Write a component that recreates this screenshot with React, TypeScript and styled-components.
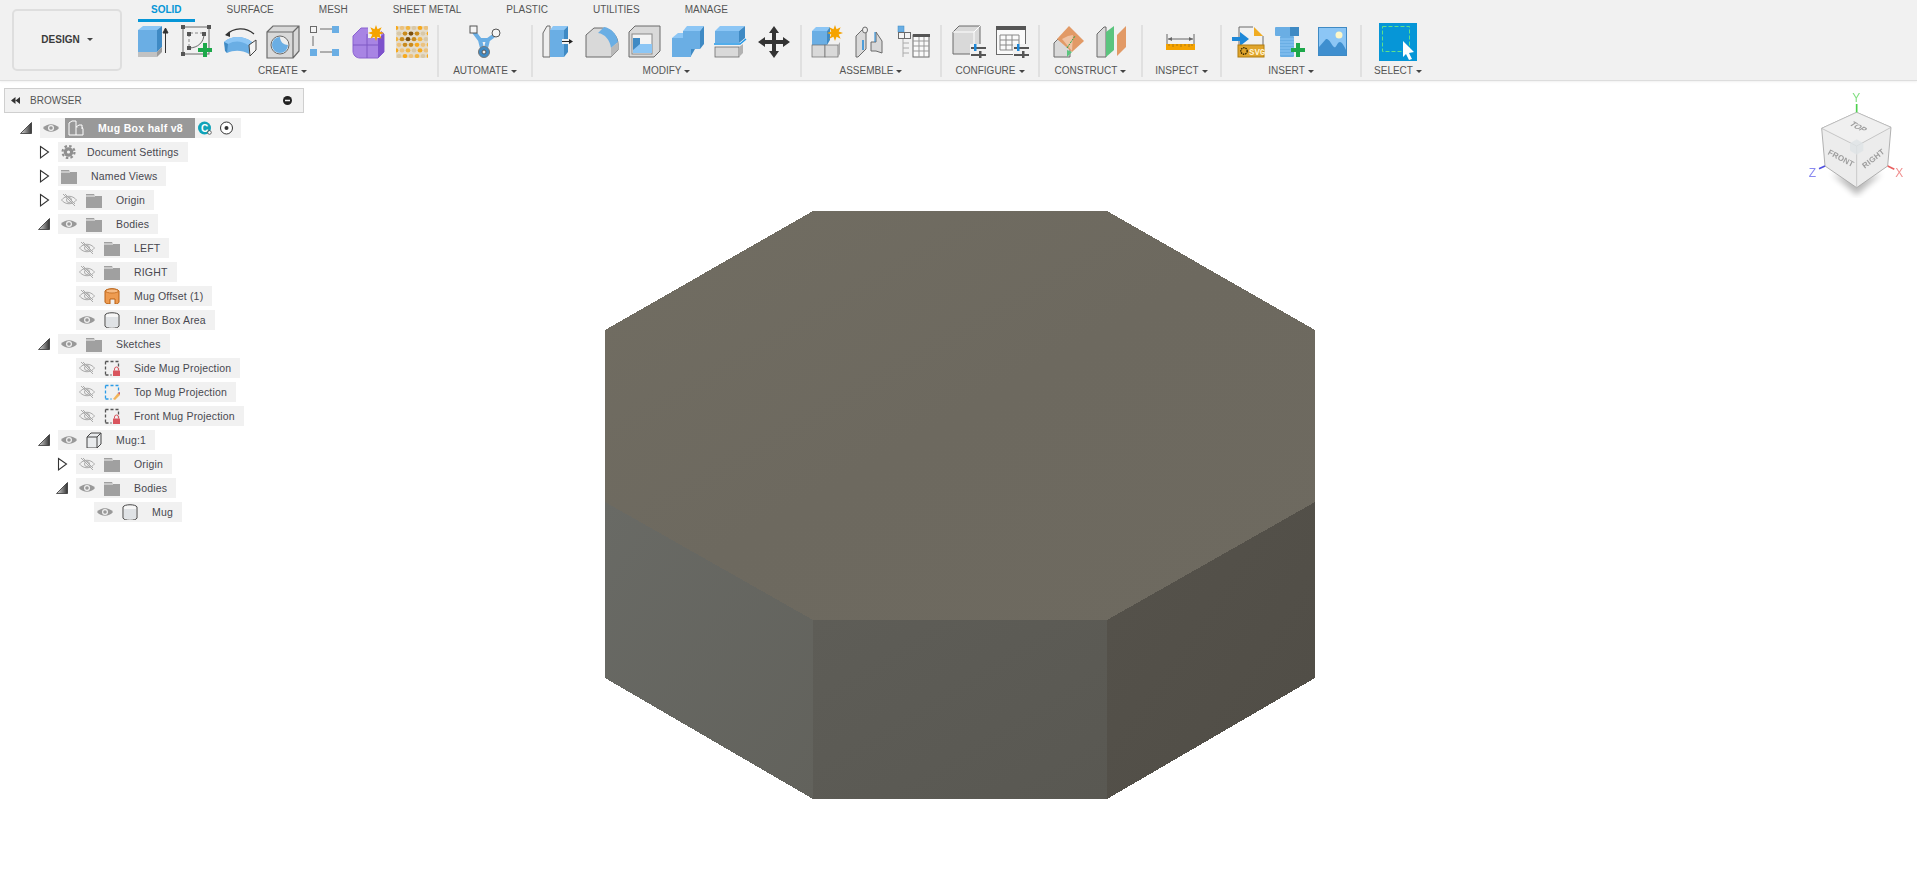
import { ReactNode } from "react";
import styled, { createGlobalStyle } from "styled-components";

const BLUE = "#6aaee4";
const BLUE_DARK = "#3f8ac4";
const BLUE_LIGHT = "#8cc6f5";
const GREY = "#d9d9d9";
const LINE = "#6b6b6b";
const GREEN = "#1da84a";
const AMBER = "#f5a300";

const GlobalStyle = createGlobalStyle`
  html, body {
    margin: 0;
    padding: 0;
    background: #ffffff;
    font-family: "Liberation Sans", Arial, sans-serif;
  }
`;

const Page = styled.div`
  position: relative;
  width: 100vw;
  height: 100vh;
  overflow: hidden;
  background: #ffffff;
`;

const Toolbar = styled.header`
  display: flex;
  height: 80px;
  background: #f1f1f1;
  border-bottom: 1px solid #dddddd;
  box-shadow: 0 1px 2px rgba(0, 0, 0, 0.06);
`;

const DesignButton = styled.button`
  display: flex;
  align-items: center;
  justify-content: center;
  gap: 7px;
  width: 110px;
  height: 62px;
  margin: 9px 6px 0 12px;
  padding: 0 0 2px;
  background: #f1f1f1;
  border: 2px solid #dedede;
  border-radius: 5px;
  font: bold 10px "Liberation Sans", Arial, sans-serif;
  color: #3a3a3a;
`;

const Caret = styled.span`
  width: 0;
  height: 0;
  border-left: 3px solid transparent;
  border-right: 3px solid transparent;
  border-top: 3px solid #444444;
`;

const Ribbon = styled.div`
  display: flex;
  flex-direction: column;
`;

const TabBar = styled.nav`
  display: flex;
  gap: 19px;
  height: 22px;
  margin-left: 10px;
`;

const Tab = styled.div<{ $active?: boolean }>`
  height: 19px;
  padding: 0 13px;
  line-height: 20px;
  font-size: 10px;
  font-weight: ${(p) => (p.$active ? "bold" : "normal")};
  color: ${(p) => (p.$active ? "#0696d7" : "#555555")};
  box-sizing: content-box;
  border-bottom: 3px solid ${(p) => (p.$active ? "#0696d7" : "transparent")};
`;

const Panels = styled.div`
  display: flex;
  margin-top: 3px;
`;

const Group = styled.section<{ $width: number }>`
  display: flex;
  flex: none;
  flex-direction: column;
  align-items: center;
  box-sizing: border-box;
  width: ${(p) => p.$width}px;
  height: 52px;
  padding-top: 1px;
  border-right: 2px solid #e0e0e0;
  &:last-child {
    border-right: none;
  }
`;

const IconRow = styled.div`
  display: flex;
  align-items: center;
  justify-content: center;
  gap: 11px;
  height: 32px;
`;

const GroupLabel = styled.div`
  display: flex;
  align-items: center;
  gap: 3px;
  margin-top: 7px;
  line-height: 12px;
  font-size: 10px;
  color: #555555;
  white-space: nowrap;
`;

const Glyph = styled.svg`
  display: block;
  flex: none;
  width: 32px;
  height: 32px;
  overflow: visible;
`;

const SelectTile = styled.svg`
  display: block;
  flex: none;
  width: 38px;
  height: 38px;
`;

const Workspace = styled.main`
  position: relative;
  height: 812px;
`;

const Model = styled.svg`
  position: absolute;
  left: 0;
  top: 0;
  width: 1917px;
  height: 812px;
`;

const ViewCube = styled.svg`
  position: absolute;
  right: 0;
  top: -1px;
  width: 127px;
  height: 120px;
  filter: blur(0.4px);
`;

const BrowserPanel = styled.aside`
  position: relative;
  width: 300px;
  padding: 7px 0 0 4px;
`;

const BrowserHeader = styled.div`
  display: flex;
  align-items: center;
  height: 23px;
  padding: 0 11px 0 6px;
  background: #f1f1f1;
  border: 1px solid #cfcfcf;
  font-size: 10px;
  color: #555555;
`;

const HeaderTitle = styled.span`
  flex: 1;
  margin-left: 10px;
`;

const Tree = styled.ul`
  display: flex;
  flex-direction: column;
  gap: 4px;
  margin: 5px 0 0 18px;
  padding: 0;
  list-style: none;
`;

const Row = styled.li<{ $level: number }>`
  display: flex;
  align-items: center;
  height: 20px;
  padding-left: ${(p) => p.$level * 18}px;
`;

const Twisty = styled.svg`
  flex: none;
  width: 18px;
  height: 20px;
  overflow: visible;
`;

const Pill = styled.div`
  display: inline-flex;
  align-items: center;
  height: 20px;
  padding: 0 9px 0 3px;
  background: #f1f1f1;
  font-size: 10.5px;
  letter-spacing: 0.17px;
  color: #484850;
  white-space: nowrap;
`;

const Slot = styled.svg`
  flex: none;
  width: 16px;
  height: 16px;
`;

const EyeSlot = styled(Slot)`
  margin-right: 9px;
`;

const NodeSlot = styled(Slot)<{ $tight?: boolean }>`
  margin-right: ${(p) => (p.$tight ? "10px" : "14px")};
`;

const RootName = styled.div`
  display: flex;
  align-items: center;
  width: 130px;
  height: 20px;
  margin-left: -3px;
  padding-left: 3px;
  box-sizing: border-box;
  background: #999999;
  color: #ffffff;
  font-weight: bold;
  letter-spacing: 0.3px;
`;

const RootIcon = styled(Slot)`
  margin-right: 14px;
`;

const RootTail = styled.svg`
  flex: none;
  width: 44px;
  height: 20px;
  margin-right: -7px;
`;

function Star({ cx, cy, r }: { cx: number; cy: number; r: number }) {
  const pts: string[] = [];
  for (let i = 0; i < 16; i++) {
    const a = (i * Math.PI) / 8;
    const d = i % 2 === 0 ? r : r * 0.5;
    pts.push(`${cx + d * Math.cos(a)},${cy + d * Math.sin(a)}`);
  }
  return <polygon points={pts.join(" ")} fill={AMBER} />;
}

function Plus({ cx, cy }: { cx: number; cy: number }) {
  return (
    <path
      d={`M${cx - 2} ${cy - 7}h4v5h5v4h-5v5h-4v-5h-5v-4h5z`}
      fill={GREEN}
    />
  );
}

function Sliders({ x, y }: { x: number; y: number }) {
  return (
    <g>
      <rect x={x} y={y} width="15" height="2" fill="#555" />
      <rect x={x} y={y + 7} width="15" height="2" fill="#555" />
      <rect x={x + 3} y={y - 3} width="2.5" height="7" fill="#1e88d8" />
      <rect x={x + 8} y={y + 4} width="2.5" height="7" fill="#555" />
    </g>
  );
}

// honeycomb cells of the lattice tool, darker towards the middle
const cells: { x: number; y: number; fill: string }[] = [];
for (let r = 0; r < 6; r++) {
  for (let c = 0; c < 6; c++) {
    const x = c * 6 + (r % 2 ? 3 : 0);
    const y = r * 5.6 + 2;
    const d = Math.hypot(x - 13, y - 11);
    const warm = (r * 3 + c * 5) % 4;
    cells.push({
      x,
      y,
      fill: d < 4 ? "#7a4e0c" : d < 9 ? "#c98a1c" : warm === 0 ? "#f7a91c" : warm === 1 ? "#ecc27e" : warm === 2 ? "#f2b540" : "#d8c8a8",
    });
  }
}

const icons: Record<string, ReactNode> = {
  extrude: (
    <>
      <rect x="0" y="4" width="19" height="22" fill={BLUE} />
      <polygon points="0,4 5,0 24,0 19,4" fill={BLUE_LIGHT} />
      <polygon points="19,4 24,0 24,21 19,26" fill={BLUE_DARK} />
      <rect x="0" y="26" width="19" height="5" fill="#c2c2c2" />
      <polygon points="19,26 24,21 24,26 19,31" fill="#9c9c9c" />
      <path d="M27.5 27V3M25 7l2.5-5 2.5 5z" stroke="#333" strokeWidth="1" fill="#333" />
    </>
  ),
  sketch: (
    <>
      <rect x="2" y="1" width="26" height="27" fill="none" stroke={LINE} />
      <path d="M9 7h15M8 8v14" stroke="#888" strokeDasharray="3 2" fill="none" />
      <path d="M23 8c0 8-6 14-15 14" stroke={LINE} fill="none" />
      {[[0, -1], [26, -1], [0, 26], [6, 6], [21, 6], [6, 20]].map(([x, y]) => (
        <rect key={`${x}-${y}`} x={x} y={y} width="4" height="4" fill="#555" />
      ))}
      <Plus cx={24} cy={24} />
    </>
  ),
  sweep: (
    <>
      <path d="M2 9C10 1 22 1 30 8" stroke="#333" strokeWidth="1.2" fill="none" />
      <path d="M1 9l5-3v5z" fill="#333" />
      <path d="M0 16c8-7 20-6 28 0l-3 12C18 24 10 24 3 27z" fill={BLUE} />
      <path d="M0 16c8-7 20-6 28 0l-4 3c-6-4-13-5-20-1z" fill={BLUE_LIGHT} />
      <path d="M0 16l4 2-1 9-2-2z" fill={BLUE_DARK} />
      <polygon points="25,19 32,14 32,24 26,30" fill="#f4f4f4" stroke="#444" />
    </>
  ),
  hole: (
    <>
      <polygon points="0,6 6,0 32,0 32,25 26,32 0,32" fill={GREY} />
      <path d="M0 6h26v26H0zM0 6l6-6h26v25l-6 7M26 6l6-6" fill="none" stroke={LINE} strokeWidth="1.2" />
      <circle cx="13" cy="19" r="9" fill="#eee" stroke={LINE} />
      <path d="M13 11a8 8 0 1 0 8 8c-4 0-8-3-8-8z" fill={BLUE} />
    </>
  ),
  pattern: (
    <>
      <path d="M10 3h12M3 10v10M10 26h12" stroke={LINE} />
      <rect x="0.5" y="0.5" width="6" height="6" fill="#f4f4f4" stroke={LINE} />
      <rect x="22" y="0" width="7" height="7" fill={BLUE} />
      <rect x="0" y="23" width="7" height="7" fill={BLUE} />
      <rect x="22" y="23" width="7" height="7" fill={BLUE} />
    </>
  ),
  form: (
    <>
      <path d="M8 2h16l7 6v18l-6 6H7c-4 0-7-3-7-7V10z" fill="#a884e4" stroke="#8a62d0" />
      <path d="M0 19h25M14 8v24" stroke="#7e58c4" />
      <path d="M25 12l6-4v18l-6 6z" fill="#7d52cc" />
      <rect x="15" y="-1" width="13" height="13" fill="#f1f1f1" />
      <Star cx={23} cy={7} r={8} />
    </>
  ),
  lattice: (
    <>
      <rect width="32" height="32" fill="#e4dccb" />
      <svg x="0" y="0" width="32" height="32" viewBox="0 0 32 32">
        {cells.map((c) => (
          <ellipse key={`${c.x}-${c.y}`} cx={c.x} cy={c.y} rx="2.4" ry="2.1" fill={c.fill} />
        ))}
      </svg>
    </>
  ),
  automate: (
    <>
      <path d="M5 6L11 14 14 26M27 8L19 14 16 26M11 14h8" stroke={BLUE} strokeWidth="4" fill="none" />
      <rect x="1" y="0" width="7" height="7" fill="#f4f4f4" stroke="#555" />
      <circle cx="27" cy="7" r="4" fill="#f4f4f4" stroke="#555" />
      <circle cx="15" cy="26" r="5.5" fill={BLUE_DARK} stroke="#777" />
      <circle cx="15" cy="26" r="2" fill="#eee" stroke="#555" />
    </>
  ),
  pressPull: (
    <>
      <polygon points="0,7 4,0 7,0 7,31 0,31" fill="#eee" stroke={LINE} />
      <rect x="7" y="4" width="14" height="27" fill={BLUE} />
      <polygon points="7,4 10,0 25,0 21,4" fill={BLUE_LIGHT} />
      <polygon points="21,4 25,0 25,26 21,31" fill={BLUE_DARK} />
      <rect x="19" y="13" width="10" height="5" fill="#f1f1f1" />
      <path d="M19 15.5h9" stroke="#222" />
      <path d="M26 13l4 2.5-4 2.5z" fill="#222" />
    </>
  ),
  fillet: (
    <>
      <path d="M0 9L8 2h8c9 0 16 8 16 16v6l-7 7H0z" fill={GREY} stroke={LINE} />
      <path d="M12 7l6-6c7 1 13 7 14 15l-7 6C24 14 19 8 12 7z" fill={BLUE} />
      <path d="M25 22l7-6v8l-7 7z" fill="#b9b9b9" />
    </>
  ),
  shell: (
    <>
      <polygon points="0,6 6,0 31,0 31,25 25,31 0,31" fill={GREY} stroke={LINE} />
      <rect x="3" y="8" width="20" height="20" fill="#f4f4f4" stroke="#888" />
      <rect x="4" y="12" width="7" height="12" fill={BLUE_DARK} />
      <polygon points="4,24 11,18 23,18 23,27 4,27" fill={BLUE_LIGHT} />
    </>
  ),
  combine: (
    <>
      <rect x="0" y="12" width="19" height="19" fill={BLUE} />
      <polygon points="0,12 6,7 12,7 12,12" fill={BLUE_LIGHT} />
      <rect x="11" y="5" width="17" height="18" fill={BLUE} />
      <polygon points="11,5 15,0 32,0 28,5" fill={BLUE_LIGHT} />
      <polygon points="28,5 32,0 32,18 28,23" fill={BLUE_DARK} />
      <polygon points="19,23 23,23 19,30" fill={BLUE_DARK} />
    </>
  ),
  split: (
    <>
      <rect x="0" y="5" width="24" height="12" fill={BLUE} />
      <polygon points="0,5 5,0 30,0 24,5" fill={BLUE_LIGHT} />
      <polygon points="24,5 30,0 30,12 24,17" fill={BLUE_DARK} />
      <path d="M-1 18h26l6-5" stroke="#1e96e8" strokeWidth="1.5" fill="none" />
      <rect x="0" y="21" width="24" height="10" fill={GREY} stroke={LINE} strokeWidth="0.8" />
      <polygon points="24,21 28,18 28,27 24,31" fill="#b2b2b2" />
    </>
  ),
  move: (
    <path
      d="M16 0l5 7h-3v7h7v-3l7 5-7 5v-3h-7v7h3l-5 7-5-7h3v-7H7v3l-7-5 7-5v3h7V7h-3z"
      fill="#333"
    />
  ),
  component: (
    <>
      <rect x="0" y="5" width="15" height="14" fill={BLUE} />
      <polygon points="0,5 4,1 18,1 15,5" fill={BLUE_LIGHT} />
      <polygon points="15,5 18,1 18,14 15,19" fill={BLUE_DARK} />
      <rect x="0" y="19" width="13" height="12" fill={GREY} stroke={LINE} strokeWidth="0.7" />
      <rect x="13" y="19" width="13" height="12" fill={GREY} stroke={LINE} strokeWidth="0.7" />
      <polygon points="26,19 28,16 28,28 26,31" fill="#aaa" />
      <Star cx={23} cy={7} r={8} />
    </>
  ),
  joint: (
    <>
      <path d="M1 10l7-7h3v20l-8 8H1z" fill={GREY} stroke={LINE} />
      <ellipse cx="10" cy="4" rx="2.5" ry="3" fill="#eee" stroke={LINE} />
      <path d="M8 14v10" stroke="#1e88d8" strokeWidth="1.5" />
      <path d="M16 16h5V6l6 9v12l-6-2h-5z" fill={GREY} stroke={LINE} />
      <path d="M20 6v10" stroke="#1e88d8" />
    </>
  ),
  tree: (
    <>
      <rect x="0" y="0" width="6" height="6" fill={BLUE} stroke={BLUE_DARK} strokeWidth="0.5" />
      <rect x="0.5" y="6.5" width="6" height="6" fill="#f4f4f4" stroke={LINE} />
      <rect x="6.5" y="6.5" width="6" height="6" fill="#f4f4f4" stroke={LINE} />
      <path d="M5 13v18M5 17h6M5 22h6M5 27h6" stroke="#aaa" fill="none" />
      <rect x="15" y="9" width="16" height="22" fill="#fafafa" stroke={LINE} />
      <rect x="15" y="8" width="17" height="3" fill="#555" />
      <path d="M15 15h16M15 20h16M15 25h16M21 11v20M26 11v20" stroke="#999" fill="none" />
    </>
  ),
  configBox: (
    <>
      <polygon points="0,6 6,0 27,0 27,21 21,28 0,28" fill={GREY} stroke={LINE} />
      <path d="M0 6h21v22M21 6l6-6" stroke="#fff" fill="none" />
      <rect x="17" y="18" width="16" height="14" fill="#f1f1f1" />
      <Sliders x={18} y={21} />
    </>
  ),
  configTable: (
    <>
      <rect x="0.5" y="0.5" width="29" height="28" fill="#fafafa" stroke={LINE} />
      <rect x="0" y="0" width="30" height="4" fill="#555" />
      <path d="M4 9h19v15H4zM4 14h19M4 19h19M10 9v15M16 9v15" stroke="#888" fill="none" />
      <rect x="17" y="18" width="16" height="14" fill="#f1f1f1" />
      <Sliders x={18} y={21} />
    </>
  ),
  plane: (
    <>
      <path d="M1 17l6-6h10v20H1z" fill={GREY} stroke={LINE} />
      <polygon points="4,13 16,0 31,15 19,26" fill="#e29a66" />
      <polygon points="9,13 15,10 20,9 19,25" fill="#efc3a4" />
      <path d="M14 22L22 10" stroke={GREEN} strokeDasharray="2 1" />
      <polygon points="14,24 19,26 14,31" fill="#5bc47e" />
    </>
  ),
  midplane: (
    <>
      <polygon points="1,8 8,1 10,1 10,31 1,31" fill={GREY} stroke={LINE} />
      <polygon points="10,6 18,0 18,24 10,31" fill="#5bc47e" />
      <polygon points="21,9 30,0 30,21 21,30" fill="#e29a66" />
    </>
  ),
  measure: (
    <>
      <path d="M1 8v10M28 8v10M2 13h25" stroke="#666" fill="none" />
      <path d="M2 13l4-2v4zM27 13l-4-2v4z" fill="#666" />
      <rect x="0" y="18" width="29" height="6" fill={AMBER} />
      <path d="M3 18v2M7 18v3M11 18v2M15 18v3M19 18v2M23 18v3M26 18v2" stroke="#b07a10" />
    </>
  ),
  svgFile: (
    <>
      <path d="M7 20V1h14M31 10v10" stroke={LINE} fill="none" />
      <polygon points="22,1 31,10 22,10" fill="#f0ac22" />
      <path d="M0 11h8V6l9 7-9 7v-5H0z" fill="#1e88d8" />
      <rect x="6" y="19" width="26" height="12" fill="#e0a52c" stroke="#b07c10" />
      <circle cx="12" cy="25" r="3.2" fill="none" stroke="#3a2a00" strokeWidth="1.4" strokeDasharray="1.5 0.8" />
      <text x="17" y="29" fontSize="9" fontWeight="bold" fill="#fff3cf" fontFamily="Liberation Mono, monospace">SVG</text>
    </>
  ),
  bolt: (
    <>
      <rect x="0" y="1" width="24" height="9" rx="1" fill={BLUE} />
      <rect x="15" y="1" width="9" height="9" fill={BLUE_DARK} />
      <rect x="5" y="10" width="14" height="21" rx="1" fill={BLUE} />
      <path d="M5 13h14M5 16h14M5 19h14M5 22h14M5 25h14M5 28h14" stroke={BLUE_LIGHT} />
      <Plus cx={23} cy={24} />
    </>
  ),
  picture: (
    <>
      <rect x="0.5" y="1.5" width="28" height="28" fill={BLUE_LIGHT} stroke={BLUE_DARK} />
      <circle cx="21" cy="9" r="3.5" fill="#fdf7c8" />
      <path d="M1 26V21l7-8c3-1 5 5 8 8 2 2 3-5 6-5 2 0 4 4 6 8v5H1z" fill="#3f8fcf" />
    </>
  ),
};

type GroupDef = { label: string; width: number; tools: string[] };

const groups: GroupDef[] = [
  { label: "CREATE", width: 311, tools: ["extrude", "sketch", "sweep", "hole", "pattern", "form", "lattice"] },
  { label: "AUTOMATE", width: 94, tools: ["automate"] },
  { label: "MODIFY", width: 269, tools: ["pressPull", "fillet", "shell", "combine", "split", "move"] },
  { label: "ASSEMBLE", width: 140, tools: ["component", "joint", "tree"] },
  { label: "CONFIGURE", width: 98, tools: ["configBox", "configTable"] },
  { label: "CONSTRUCT", width: 103, tools: ["plane", "midplane"] },
  { label: "INSPECT", width: 79, tools: ["measure"] },
  { label: "INSERT", width: 140, tools: ["svgFile", "bolt", "picture"] },
];

const tabs = ["SOLID", "SURFACE", "MESH", "SHEET METAL", "PLASTIC", "UTILITIES", "MANAGE"];

type NodeKind = "folder" | "gear" | "orange" | "body" | "cube" | "lock" | "edit";
type TreeNode = {
  name: string;
  level: number;
  kind: NodeKind;
  twisty?: "open" | "closed";
  eye?: "on" | "off";
};

const nodes: TreeNode[] = [
  { name: "Document Settings", level: 1, kind: "gear", twisty: "closed" },
  { name: "Named Views", level: 1, kind: "folder", twisty: "closed" },
  { name: "Origin", level: 1, kind: "folder", twisty: "closed", eye: "off" },
  { name: "Bodies", level: 1, kind: "folder", twisty: "open", eye: "on" },
  { name: "LEFT", level: 2, kind: "folder", eye: "off" },
  { name: "RIGHT", level: 2, kind: "folder", eye: "off" },
  { name: "Mug Offset (1)", level: 2, kind: "orange", eye: "off" },
  { name: "Inner Box Area", level: 2, kind: "body", eye: "on" },
  { name: "Sketches", level: 1, kind: "folder", twisty: "open", eye: "on" },
  { name: "Side Mug Projection", level: 2, kind: "lock", eye: "off" },
  { name: "Top Mug Projection", level: 2, kind: "edit", eye: "off" },
  { name: "Front Mug Projection", level: 2, kind: "lock", eye: "off" },
  { name: "Mug:1", level: 1, kind: "cube", twisty: "open", eye: "on" },
  { name: "Origin", level: 2, kind: "folder", twisty: "closed", eye: "off" },
  { name: "Bodies", level: 2, kind: "folder", twisty: "open", eye: "on" },
  { name: "Mug", level: 3, kind: "body", eye: "on" },
];

function TwistyIcon({ state }: { state?: "open" | "closed" }) {
  return (
    <Twisty viewBox="0 0 18 20">
      <defs>
        <linearGradient id="twistyFill" x1="0" y1="0" x2="1" y2="0">
          <stop offset="0" stopColor="#dddddd" />
          <stop offset="1" stopColor="#333333" />
        </linearGradient>
      </defs>
      {state === "open" && (
        <polygon points="-1.5,15.5 9.5,15.5 9.5,4.5" fill="url(#twistyFill)" stroke="#333" strokeWidth="0.8" />
      )}
      {state === "closed" && (
        <polygon points="0.5,4.5 8.5,10 0.5,16" fill="#fff" stroke="#333" strokeWidth="1.1" />
      )}
    </Twisty>
  );
}

function Eye({ state }: { state: "on" | "off" }) {
  return (
    <EyeSlot viewBox="0 0 16 16">
      {state === "on" ? (
        <>
          <path d="M0 8c4-5 12-5 16 0-4 5-12 5-16 0z" fill="#999" />
          <circle cx="8" cy="8" r="3" fill="#f1f1f1" />
          <circle cx="8" cy="8" r="1.8" fill="#999" />
        </>
      ) : (
        <>
          <path d="M0.5 8c4-5 11-5 15 0-4 5-11 5-15 0z" fill="none" stroke="#aaa" />
          <circle cx="8" cy="8" r="2.5" fill="none" stroke="#aaa" />
          <path d="M2 2l12 12M4 2l10 10" stroke="#aaa" />
        </>
      )}
    </EyeSlot>
  );
}

function SketchBox({ accent }: { accent: string }) {
  return (
    <path
      d="M1.5 1.5v13.5M1.5 1.5h13v8M1.5 15h6"
      fill="none"
      stroke={accent}
      strokeWidth="1.3"
      strokeDasharray="3 2"
    />
  );
}

function NodeGraphic({ kind }: { kind: NodeKind }) {
  switch (kind) {
    case "folder":
      return (
        <>
          <path d="M0 2h8l1 2h7v12H0z" fill="#a0a0a0" />
          <path d="M0 4h9" stroke="#f1f1f1" />
        </>
      );
    case "gear":
      return (
        <>
          <circle cx="7.5" cy="8" r="4.8" fill="#8f8f8f" />
          <circle cx="7.5" cy="8" r="6" fill="none" stroke="#8f8f8f" strokeWidth="2.2" strokeDasharray="2.5 2.2" />
          <circle cx="7.5" cy="8" r="1.6" fill="#f1f1f1" />
        </>
      );
    case "orange":
      return (
        <>
          <path d="M1 3c2-3 12-3 14 0v11c0 1-2 2-4 2v-5H6v5c-3 0-5-1-5-2z" fill="#ee9b50" stroke="#b95f10" />
          <ellipse cx="8" cy="3" rx="6.5" ry="2" fill="#f7bb83" stroke="#b95f10" strokeWidth="0.7" />
        </>
      );
    case "body":
      return (
        <>
          <path d="M1 3c1-3 13-3 14 0v11c-1 3-13 3-14 0z" fill="#f6f6f6" stroke="#444" />
          <path d="M2 5h12v9c-2 1.500-10 1.500-12 0z" fill="#dfe2e5" />
        </>
      );
    case "cube":
      return (
        <>
          <path d="M1 5l4-4h10v11l-4 4H1z" fill="#e9ebed" stroke="#444" />
          <path d="M1 5h10v11M11 5l4-4" fill="none" stroke="#444" />
        </>
      );
    case "lock":
      return (
        <>
          <SketchBox accent="#555" />
          <rect x="9" y="10.5" width="7" height="5.500" fill="#d9555e" />
          <path d="M10.500 10.500v-1.500a2 2 0 0 1 4 0v1.500" fill="none" stroke="#d9555e" />
        </>
      );
    case "edit":
      return (
        <>
          <SketchBox accent="#2b9ce8" />
          <path d="M9 15l5-6 2 2-5 5z" fill="#f2b45a" />
          <path d="M14 9l2 2 1-2-1-1z" fill="#e05a5a" />
        </>
      );
  }
}

function RootRow() {
  return (
    <Row $level={0}>
      <TwistyIcon state="open" />
      <Pill>
        <Eye state="on" />
        <RootName>
          <RootIcon viewBox="0 0 16 16">
            <path d="M1 15V3l3-2h4v6h6l1 2v6zM8 7v8" fill="none" stroke="#fff" />
            <path d="M8 7l3-2h3v4" fill="#999" stroke="#fff" />
          </RootIcon>
          Mug Box half v8
        </RootName>
        <RootTail viewBox="0 0 44 20">
          <circle cx="9.500" cy="10" r="6.500" fill="#12a3b8" />
          <text x="6" y="13.500" fontSize="10" fontWeight="bold" fill="#fff" fontFamily="Liberation Sans, sans-serif">C</text>
          <circle cx="14.500" cy="14.500" r="1.800" fill="#fff" stroke="#333" strokeWidth="0.7" />
          <circle cx="31.500" cy="10" r="6" fill="#fff" stroke="#333" />
          <circle cx="31.500" cy="10" r="2" fill="#333" />
        </RootTail>
      </Pill>
    </Row>
  );
}

function ViewCubeGraphic() {
  return (
    <ViewCube viewBox="0 0 381 360">
      <defs>
        <filter id="soft">
          <feGaussianBlur stdDeviation="1.4" />
        </filter>
        <filter id="cubeShadow">
          <feGaussianBlur stdDeviation="9" />
        </filter>
      </defs>
      <polygon points="125,280 200,345 275,280 200,300" fill="#000" opacity="0.28" filter="url(#cubeShadow)" />
      <polygon points="200,97 303,142 293,258 200,323 105,258 95,145" fill="#ececec" stroke="#a2a2a2" strokeWidth="2.5" />
      <polygon points="200,97 303,142 200,198 95,145" fill="#f0f0f0" stroke="#b0b0b0" strokeWidth="2" />
      <path d="M200 198v125" stroke="#b8b8b8" strokeWidth="2" />
      <polygon points="180,190 200,178 220,190 220,212 200,224 180,212" fill="#dfe3e6" opacity="0.8" />
      <g filter="url(#soft)" fill="#9c9c9c" fontFamily="Liberation Sans, sans-serif" fontWeight="bold">
        <text transform="translate(176,134) rotate(28) skewX(-28)" fontSize="24">TOP</text>
        <text transform="translate(112,222) rotate(28)" fontSize="24" textLength="84">FRONT</text>
        <text transform="translate(224,266) rotate(-38)" fontSize="24" textLength="78">RIGHT</text>
      </g>
      <g filter="url(#soft)">
        <path d="M200 97V72" stroke="#4ed04e" strokeWidth="5" />
        <text x="187" y="66" fontSize="36" fill="#82e082" fontFamily="Liberation Sans, sans-serif">Y</text>
        <path d="M105 258l-18 8" stroke="#5050e0" strokeWidth="5" />
        <text x="56" y="292" fontSize="36" fill="#8a8af0" fontFamily="Liberation Sans, sans-serif">Z</text>
        <path d="M293 258l20 10" stroke="#e86060" strokeWidth="5" />
        <text x="316" y="292" fontSize="36" fill="#f09090" fontFamily="Liberation Sans, sans-serif">X</text>
      </g>
    </ViewCube>
  );
}

function ModelGraphic() {
  return (
    <Model viewBox="0 81 1917 812" shapeRendering="crispEdges">
      <defs>
        <linearGradient id="topFace" x1="0" y1="0" x2="1" y2="1">
          <stop offset="0" stopColor="#716d62" />
          <stop offset="0.5" stopColor="#6d695f" />
          <stop offset="1" stopColor="#6e6a60" />
        </linearGradient>
        <linearGradient id="leftFace" x1="0" y1="0" x2="1" y2="1">
          <stop offset="0" stopColor="#696a65" />
          <stop offset="1" stopColor="#62625c" />
        </linearGradient>
        <linearGradient id="frontFace" x1="0" y1="0" x2="1" y2="1">
          <stop offset="0" stopColor="#5e5d57" />
          <stop offset="1" stopColor="#595852" />
        </linearGradient>
        <linearGradient id="rightFace" x1="0" y1="0" x2="1" y2="1">
          <stop offset="0" stopColor="#55524b" />
          <stop offset="1" stopColor="#504d46" />
        </linearGradient>
      </defs>
      <polygon points="605,502 813,620 813,799 605,678" fill="url(#leftFace)" />
      <polygon points="813,620 1107,620 1107,799 813,799" fill="url(#frontFace)" />
      <polygon points="1107,620 1315,502 1315,678 1107,799" fill="url(#rightFace)" />
      <polygon points="813,211 1107,211 1315,330 1315,502 1107,620 813,620 605,502 605,330" fill="url(#topFace)" />
    </Model>
  );
}

export default function App() {
  return (
    <Page>
      <GlobalStyle />
      <Toolbar>
        <DesignButton>
          DESIGN
          <Caret />
        </DesignButton>
        <Ribbon>
          <TabBar>
            {tabs.map((t) => (
              <Tab key={t} $active={t === "SOLID"}>
                {t}
              </Tab>
            ))}
          </TabBar>
          <Panels>
            {groups.map((g) => (
              <Group key={g.label} $width={g.width}>
                <IconRow>
                  {g.tools.map((t) => (
                    <Glyph key={t} viewBox="0 0 32 32">
                      {icons[t]}
                    </Glyph>
                  ))}
                </IconRow>
                <GroupLabel>
                  {g.label}
                  <Caret />
                </GroupLabel>
              </Group>
            ))}
            <Group $width={72}>
              <IconRow>
                <SelectTile viewBox="0 0 38 38">
                  <rect width="38" height="38" fill="#0696d7" />
                  <rect x="3.500" y="3.500" width="27" height="25" fill="none" stroke="#5fe08a" strokeDasharray="4 2" />
                  <path d="M24 18l11 11-5 1 3 6-3 1-3-6-3 3z" fill="#fff" />
                </SelectTile>
              </IconRow>
              <GroupLabel>
                SELECT
                <Caret />
              </GroupLabel>
            </Group>
          </Panels>
        </Ribbon>
      </Toolbar>
      <Workspace>
        <ModelGraphic />
        <ViewCubeGraphic />
        <BrowserPanel>
          <BrowserHeader>
            <svg width="9" height="7" viewBox="0 0 9 7">
              <path d="M4.500 0v7L0 3.500zM9 0v7L4.500 3.500z" fill="#333" />
            </svg>
            <HeaderTitle>BROWSER</HeaderTitle>
            <svg width="9" height="9" viewBox="0 0 9 9">
              <circle cx="4.500" cy="4.500" r="4.500" fill="#222" />
              <rect x="2" y="3.750" width="5" height="1.500" fill="#f1f1f1" />
            </svg>
          </BrowserHeader>
          <Tree>
            <RootRow />
            {nodes.map((n, i) => (
              <Row key={i} $level={n.level}>
                <TwistyIcon state={n.twisty} />
                <Pill>
                  {n.eye && <Eye state={n.eye} />}
                  <NodeSlot viewBox="0 0 16 16" $tight={n.kind === "gear"}>
                    <NodeGraphic kind={n.kind} />
                  </NodeSlot>
                  {n.name}
                </Pill>
              </Row>
            ))}
          </Tree>
        </BrowserPanel>
      </Workspace>
    </Page>
  );
}
